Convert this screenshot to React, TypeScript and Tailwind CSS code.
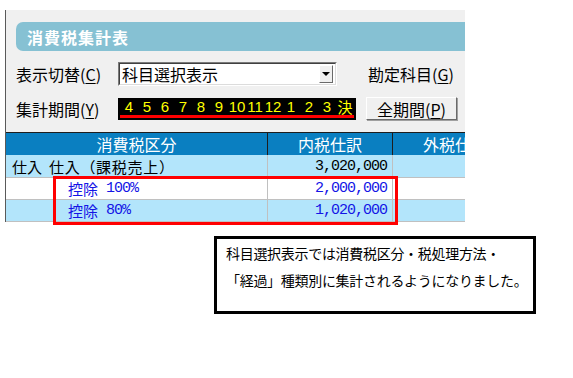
import React from 'react'

const jp = { fontFamily: '"Noto Sans CJK JP", "Noto Sans", sans-serif' }
const mono = { fontFamily: '"Liberation Mono", "Noto Sans CJK JP", monospace' }

const months = ['4', '5', '6', '7', '8', '9', '10', '11', '12', '1', '2', '3', '決']

function Key({ label, k }: { label: string; k: string }) {
  return (
    <span className="whitespace-nowrap">
      {label}(<span className="underline underline-offset-2">{k}</span>)
    </span>
  )
}

export default function App() {
  return (
    <div className="relative h-[378px] w-[573px] overflow-hidden bg-white text-black" style={jp}>
      {/* app window */}
      <div className="ml-[5px] mt-[10px] w-[460px] border-l border-[#5a5a5a]">
        <div className="bg-[#f0f0f0] pb-[12px] pl-[10px] pt-[12px]">
          {/* title */}
          <div className="flex h-[29px] items-center rounded-l-[7px] bg-[#86c1d3] pl-[11px] text-[16px] font-bold tracking-[1px] text-white">
            消費税集計表
          </div>

          {/* row: 表示切替 */}
          <div className="mt-[11px] flex h-[24px] items-center text-[16px] leading-none">
            <div className="w-[102px]">
              <Key label="表示切替" k="C" />
            </div>
            <div className="flex h-[24px] w-[219px] items-center border border-b-white border-l-[#7a7a7a] border-r-white border-t-[#7a7a7a] bg-white">
              <div className="flex h-full flex-1 items-center border border-l-[#404040] border-t-[#404040] border-r-[#dcdcdc] border-b-[#dcdcdc] pl-[2px]">
                <span className="flex-1">科目選択表示</span>
                <span className="mr-[2px] flex h-[18px] w-[14px] items-center justify-center border border-b-[#6a6a6a] border-l-white border-r-[#6a6a6a] border-t-white bg-[#f0f0f0]">
                  <span className="h-0 w-0 border-l-[4px] border-r-[4px] border-t-[4px] border-l-transparent border-r-transparent border-t-black" />
                </span>
              </div>
            </div>
            <div className="ml-[31px]">
              <Key label="勘定科目" k="G" />
            </div>
          </div>

          {/* row: 集計期間 */}
          <div className="mt-[11px] flex h-[23px] items-center text-[16px] leading-none">
            <div className="w-[102px]">
              <Key label="集計期間" k="Y" />
            </div>
            <div className="flex h-[22px] w-[238px] flex-col bg-black pl-[2px]">
              <div className="flex flex-1 items-center pt-[1px]">
                {months.map((m) => (
                  <span
                    key={m}
                    className="w-[18px] text-center text-[15px] leading-none text-[#ffff00]"
                    style={m === '決' ? jp : { fontFamily: '"Liberation Sans", sans-serif' }}
                  >
                    {m}
                  </span>
                ))}
              </div>
              <div className="mb-[2px] h-[3px] w-[234px] bg-[#ff0000]" />
            </div>
            <button className="ml-[10px] flex h-[23px] w-[91px] items-center justify-center border border-b-[#6a6a6a] border-l-white border-r-[#6a6a6a] border-t-white bg-[#f0f0f0] text-[16px] shadow-[1px_1px_0_#a0a0a0]">
              <Key label="全期間" k="P" />
            </button>
          </div>
        </div>

        {/* table */}
        <div className="grid grid-cols-[262px_125px_72px] text-[16px] leading-none">
          <div className="flex h-[23px] items-center justify-center border-r border-t border-[#1e1e1e] bg-[#0a7fc1] text-white">消費税区分</div>
          <div className="flex h-[23px] items-center justify-center border-r border-t border-[#1e1e1e] bg-[#0a7fc1] text-white">内税仕訳</div>
          <div className="flex h-[23px] items-center overflow-hidden whitespace-nowrap border-t border-[#1e1e1e] bg-[#0a7fc1] pl-[30px] text-white">外税仕</div>

          <div className="flex h-[23px] items-center border-b border-r border-[#c0c0c0] bg-[#b3e5fb] pl-[6px] text-[15px]">
            仕入<span className="ml-[7px] tracking-[0.7px]">仕入（課税売上）</span>
          </div>
          <div className="flex h-[23px] items-center justify-end border-b border-r border-[#c0c0c0] bg-[#b3e5fb] pr-[5px] text-[15px] tracking-[-1px]" style={mono}>3,020,000</div>
          <div className="h-[23px] border-b border-[#c0c0c0] bg-[#b3e5fb]" />

          <div className="flex h-[22px] items-center border-b border-r border-[#c0c0c0] bg-white pl-[62px] text-[15px] text-[#1414e6]">
            控除<span className="ml-[8px] text-[15px] tracking-[-1px]" style={mono}>100%</span>
          </div>
          <div className="flex h-[22px] items-center justify-end border-b border-r border-[#c0c0c0] bg-white pr-[5px] text-[15px] tracking-[-1px] text-[#1414e6]" style={mono}>2,000,000</div>
          <div className="h-[22px] border-b border-[#c0c0c0] bg-white" />

          <div className="flex h-[22px] items-center border-b border-r border-[#c0c0c0] bg-[#b3e5fb] pl-[62px] text-[15px] text-[#1414e6]">
            控除<span className="ml-[8px] text-[15px] tracking-[-1px]" style={mono}>80%</span>
          </div>
          <div className="flex h-[22px] items-center justify-end border-b border-r border-[#c0c0c0] bg-[#b3e5fb] pr-[5px] text-[15px] tracking-[-1px] text-[#1414e6]" style={mono}>1,020,000</div>
          <div className="h-[22px] border-b border-[#c0c0c0] bg-[#b3e5fb]" />
        </div>
      </div>

      {/* red highlight */}
      <div className="absolute left-[53px] top-[176px] h-[49px] w-[345px] border-[3px] border-[#ff0000]" />

      {/* note callout */}
      <div className="absolute left-[214px] top-[236px] h-[78px] w-[322px] border-[3px] border-black bg-white pl-[9px] pt-[1px] text-[14px] leading-[27px] tracking-[-0.3px]">
        <div>科目選択表示では消費税区分・税処理方法・</div>
        <div>「経過」種類別に集計されるようになりました。</div>
      </div>
    </div>
  )
}
